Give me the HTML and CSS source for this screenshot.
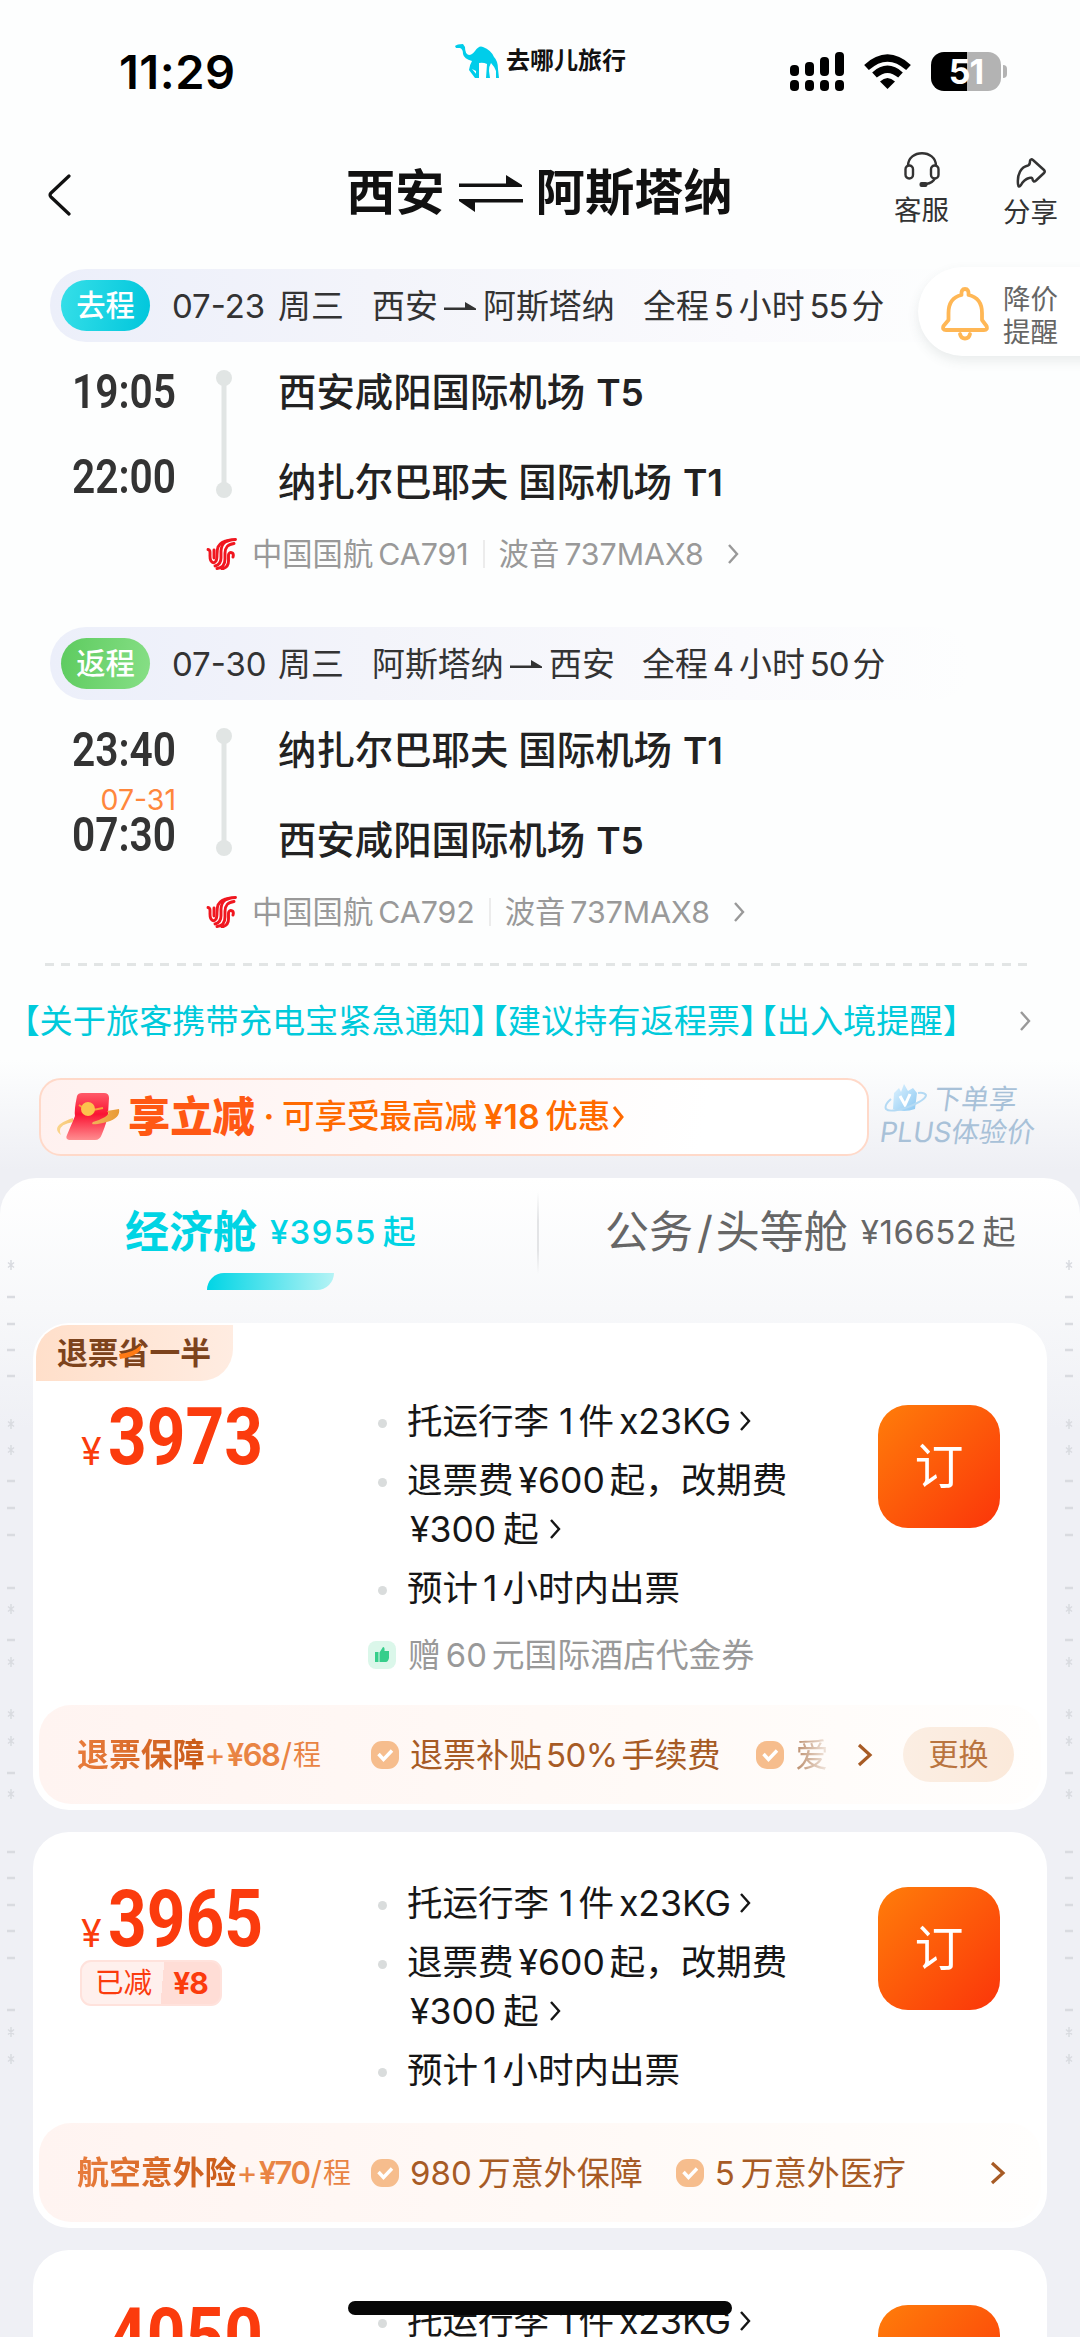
FILE: index.html
```html
<!DOCTYPE html>
<html lang="zh-CN">
<head>
<meta charset="utf-8">
<title>西安 - 阿斯塔纳</title>
<link rel="stylesheet" href="styles.css">
</head>
<body>
<svg class="defs" width="0" height="0">
  <defs>
    <linearGradient id="gRed" x1="0" y1="0" x2="0" y2="1"><stop offset="0" stop-color="#ff5a68"/><stop offset=".45" stop-color="#fa1433"/><stop offset="1" stop-color="#ff8d90"/></linearGradient>
    <linearGradient id="gGold" x1="0" y1="0" x2="1" y2="0"><stop offset="0" stop-color="#fbd58c"/><stop offset="1" stop-color="#e99a35"/></linearGradient>
    <linearGradient id="gGem" x1="0" y1="0" x2="1" y2="1"><stop offset="0" stop-color="#dff3ff"/><stop offset="1" stop-color="#8cc8f2"/></linearGradient>
    <symbol id="more" viewBox="0 0 12 22"><path d="M2 2 10 11 2 20" fill="none" stroke="currentColor" stroke-width="2.4"/></symbol>
    <symbol id="half" viewBox="0 0 33 14"><path d="M0 8.500H21V3L32 9.500V11H0Z" fill="currentColor"/></symbol>
    <symbol id="check" viewBox="0 0 28 28"><rect width="28" height="28" rx="11" fill="#f6bd8d"/><path d="M7.5 13 12.5 18.5 21 9.5" fill="none" stroke="#fff" stroke-width="3.4"/></symbol>
    <symbol id="airchina" viewBox="0 0 31 32"><g fill="none" stroke="#f0161f" stroke-width="2.9" stroke-linecap="round"><path d="M29.500 1.500C18 2 15.500 6 15 13V20C15 25 13 27 9 28"/><path d="M28 5.500C21.500 6.500 19.500 9 19 15V21C19 27 16 30 11 30.500"/><path d="M2 11.500C4.500 12 4 14 4 18C4 25 8 26 10 23C12 20 10 14 12 9C14 5 18 3 23 2.500"/><path d="M8 12V20"/><path d="M27 19C28.500 14 23 13 22.500 17V23C22.500 27 20 30 16 31"/></g></symbol>
  </defs>
</svg>
<div class="screen">
  <header class="status">
    <div class="clock">11:29</div>
    <div class="brand">
      <svg width="46" height="36" viewBox="0 0 46 36"><path fill="#00cdea" d="M0 2Q2 0 8 0L10 3Q10 10 14 11Q17 11 20 7Q24 1 28 3Q36 6 39 13Q43 17 43 25L44 34H41L41 27Q39 22 36 19Q34 22 34 27L35 34H31L32 20Q28 18 24 19L24 34H21L21 27L17 25L22 31L22 34H20L14 26Q15 20 17 17Q9 15 8 10Q8 5 5 4L1 4Z"/></svg>
      <span>去哪儿旅行</span>
    </div>
    <div class="sys">
      <svg width="54" height="40" viewBox="0 0 54 40"><g fill="#000"><rect x="0" y="13" width="9" height="11" rx="4"/><rect x="15" y="10" width="9" height="14" rx="4"/><rect x="30" y="5" width="9" height="19" rx="4"/><rect x="45" y="0" width="9" height="24" rx="4"/><rect x="0" y="28" width="9" height="11" rx="4"/><rect x="15" y="28" width="9" height="11" rx="4"/><rect x="30" y="28" width="9" height="11" rx="4"/><rect x="45" y="28" width="9" height="11" rx="4"/></g></svg>
      <svg class="wifi" width="47" height="36" viewBox="0 0 47 36"><g fill="none" stroke="#000" stroke-width="7"><path d="M2.500 13.500Q23.500-5.500 44.500 13.500"/><path d="M10.500 21Q23.500 9.500 36.500 21"/></g><path d="M16 27.500Q23.500 20.500 31 27.500L23.500 35Z"/></svg>
      <div class="battery"><b>51</b></div><i class="nub"></i>
    </div>
  </header>

  <nav class="nav">
    <svg class="back" width="24" height="42" viewBox="0 0 24 42"><path d="M22 2 4 19Q2 21 4 23L22 40" fill="none" stroke="#111" stroke-width="3.2" stroke-linecap="round"/></svg>
    <h1 class="title"><span>西安</span>
      <svg width="64" height="40" viewBox="0 0 64 40"><path d="M0 10.500H47V2L63 12V14H0ZM64 26V29.500H16V39L0 28V26Z" fill="#111"/></svg>
      <span>阿斯塔纳</span></h1>
    <div class="act service">
      <svg width="36" height="36" viewBox="0 0 36 36"><g fill="none" stroke="#333" stroke-width="2.4"><path d="M4 14C4-3 32-3 32 14"/><rect x="1.500" y="13.500" width="7.500" height="13" rx="3.700"/><rect x="27" y="13.500" width="7.500" height="13" rx="3.700"/><path d="M31 26Q29 31 22 32"/></g><rect x="15.500" y="30" width="8" height="5" rx="2" fill="#333"/></svg>
      <span>客服</span>
    </div>
    <div class="act share">
      <svg width="30" height="30" viewBox="0 0 30 30"><path d="M14 3Q14.500 0 17.500 2.500L28 12Q29.500 13.500 28 15L20 22.500Q17 25 16.500 21Q16 19 13 20Q8 21.500 5 27Q2.500 30.500 2 26C1 16 5 9 12 7.500Q14 7 14 3Z" fill="none" stroke="#333" stroke-width="2.500" stroke-linejoin="round"/></svg>
      <span>分享</span>
    </div>
  </nav>

  <section class="leg out">
    <div class="pill"><b class="tag">去程</b><span class="w106">07-23</span><span class="w94">周三</span><span class="w71">西安</span><svg class="arr" width="33" height="14"><use href="#half"/></svg><span class="w160">阿斯塔纳</span><span class="dur"><i>全程</i><i>5</i><i>小时</i><i>55</i><i>分</i></span></div>
    <div class="route">
      <div class="times"><div>19:05</div><small></small><div>22:00</div></div>
      <svg class="track" width="16" height="128"><path d="M8 8V120" stroke="#e1e5e4" stroke-width="5"/><circle cx="8" cy="8" r="8" fill="#e1e5e4"/><circle cx="8" cy="120" r="8" fill="#e1e5e4"/></svg>
      <div class="ports"><div>西安咸阳国际机场<span>T5</span></div><div>纳扎尔巴耶夫<em></em>国际机场<span>T1</span></div></div>
    </div>
    <div class="plane"><svg width="31" height="32"><use href="#airchina"/></svg><span>中国国航</span><span>CA791</span><i></i><span>波音</span><span>737MAX8</span><svg class="m" width="12" height="22"><use href="#more"/></svg></div>
  </section>

  <section class="leg ret">
    <div class="pill"><b class="tag">返程</b><span class="w106">07-30</span><span class="w94">周三</span><span class="w138">阿斯塔纳</span><svg class="arr" width="33" height="14"><use href="#half"/></svg><span class="w93">西安</span><span class="dur"><i>全程</i><i>4</i><i>小时</i><i>50</i><i>分</i></span></div>
    <div class="route">
      <div class="times"><div>23:40</div><small>07-31</small><div>07:30</div></div>
      <svg class="track" width="16" height="128"><path d="M8 8V120" stroke="#e1e5e4" stroke-width="5"/><circle cx="8" cy="8" r="8" fill="#e1e5e4"/><circle cx="8" cy="120" r="8" fill="#e1e5e4"/></svg>
      <div class="ports"><div>纳扎尔巴耶夫<em></em>国际机场<span>T1</span></div><div>西安咸阳国际机场<span>T5</span></div></div>
    </div>
    <div class="plane"><svg width="31" height="32"><use href="#airchina"/></svg><span>中国国航</span><span>CA792</span><i></i><span>波音</span><span>737MAX8</span><svg class="m" width="12" height="22"><use href="#more"/></svg></div>
  </section>

  <div class="dash"></div>
  <div class="notice"><span>【关于旅客携带充电宝紧急通知】</span><span>【建议持有返程票】</span><span>【出入境提醒】</span><svg width="12" height="22"><use href="#more"/></svg></div>

  <div class="offers">
    <div class="promo">
      <svg width="64" height="50" viewBox="0 0 64 50"><path d="M20 4Q21 1 25 1H47Q52 1 52 6L51 22Q50 30 45 42Q43 48 38 48H12Q8 47 10 43L18 24Q17 18 20 4Z" fill="url(#gRed)"/><path d="M16 26Q-8 34 4 43Q-1 33 16 30ZM36 30Q56 24 50 19L62 17Q64 27 46 31Q32 34 36 30Z" fill="url(#gGold)"/><path d="M22 13 31 19 46 16" fill="none" stroke="#f9a13c" stroke-width="2"/><circle cx="31" cy="17" r="7" fill="#fcc24d"/></svg>
      <b>享立减</b><i>·</i><span>可享受最高减</span><span class="yen">¥18</span><span>优惠</span><svg class="go" width="12" height="24" viewBox="0 0 12 24"><path d="M2 2 10 12 2 22" fill="none" stroke="#ff6a00" stroke-width="3"/></svg>
    </div>
    <div class="plus">
      <div><svg width="44" height="30" viewBox="0 0 44 30"><path d="M10 10 15 5 17 9 20 1 24 8 29 5 33 10 31 26Q20 30 9 26Z" fill="url(#gGem)"/><path d="M16 13 21 22 26 11" fill="none" stroke="#fff" stroke-width="3"/><path d="M7 16Q0 22 2 26Q6 30 24 24Q42 17 42 12Q40 9 34 10" fill="none" stroke="#b4daf4" stroke-width="2"/></svg><span>下单享</span></div>
      <div><span>PLUS体验价</span></div>
    </div>
  </div>

  <main class="cabins">
    <svg class="deco l" width="10" height="810" viewBox="0 0 10 810"><g id="marks" fill="none" stroke="#d9dbe0" stroke-width="1.5"><path id="st" d="M5 2V12M2 4.500 8 9.500M8 4.500 2 9.500"/><use href="#st" y="159"/><use href="#st" y="185"/><use href="#st" y="344"/><use href="#st" y="397"/><use href="#st" y="449"/><use href="#st" y="476"/><use href="#st" y="529"/><use href="#st" y="767"/><use href="#st" y="794"/><path stroke-width="2.4" d="M1 39H9M1 66H9M1 92H9M1 118H9M1 223H9M1 250H9M1 277H9M1 330H9M1 382H9M1 515H9M1 594H9M1 620H9M1 647H9M1 673H9M1 700H9M1 752H9"/></g></svg>
    <svg class="deco r" width="10" height="810" viewBox="0 0 10 810"><use href="#marks"/></svg>
    <div class="tabs">
      <div class="tab on"><b>经济舱</b><span>¥3955</span><span>起</span></div>
      <div class="tab"><b>公务</b><b class="sl">/</b><b>头等舱</b><span>¥16652</span><span>起</span></div>
    </div>

    <article class="card c1">
      <div class="ribbon">退票省一半<svg width="24" height="14" viewBox="0 0 24 14"><path d="M0 9Q14 8 22 0Q24 10 1 14Z" fill="#ff7a14"/></svg></div>
      <div class="fare">
        <div class="price"><span>¥</span><b>3973</b></div>
        <ul>
          <li><span>托运行李</span><span>1</span><span>件</span><span>x23KG</span><svg width="12" height="22"><use href="#more"/></svg></li>
          <li><span>退票费</span><span>¥600</span><span>起，改期费</span></li>
          <li class="cont"><span>¥300</span><span>起</span><svg width="12" height="22"><use href="#more"/></svg></li>
          <li><span>预计</span><span>1</span><span>小时内出票</span></li>
          <li class="gift"><svg width="28" height="28" viewBox="0 0 28 28"><rect width="28" height="28" rx="8" fill="#dbf7ea"/><path d="M7 11H10.500V21H7ZM11.500 11.500 15 6Q17 6 16.500 10H21V17Q20 21 18 21H11.500Z" fill="#36ce8b"/></svg><span>赠</span><span>60</span><span>元国际酒店代金券</span></li>
        </ul>
        <button>订</button>
      </div>
      <div class="strip">
        <div class="plan"><b>退票保障</b><i>+</i><em>¥68</em><i class="s">/</i><small>程</small></div>
        <svg width="28" height="28"><use href="#check"/></svg><span>退票补贴</span><span class="pct">50%</span><span>手续费</span>
        <svg class="ck2" width="28" height="28"><use href="#check"/></svg><span class="fade">爱</span>
        <svg class="go" width="16" height="24" viewBox="0 0 16 24"><path d="M2 2 13 12 2 22" fill="none" stroke="#a75b25" stroke-width="3.200"/></svg>
        <span class="swap">更换</span>
      </div>
    </article>

    <article class="card c2">
      <div class="fare">
        <div class="price"><span>¥</span><b>3965</b><div class="cut"><span>已减</span><b>¥8</b></div></div>
        <ul>
          <li><span>托运行李</span><span>1</span><span>件</span><span>x23KG</span><svg width="12" height="22"><use href="#more"/></svg></li>
          <li><span>退票费</span><span>¥600</span><span>起，改期费</span></li>
          <li class="cont"><span>¥300</span><span>起</span><svg width="12" height="22"><use href="#more"/></svg></li>
          <li><span>预计</span><span>1</span><span>小时内出票</span></li>
        </ul>
        <button>订</button>
      </div>
      <div class="strip">
        <div class="plan"><b>航空意外险</b><i>+</i><em>¥70</em><i class="s">/</i><small>程</small></div>
        <svg width="28" height="28"><use href="#check"/></svg><span>980</span><span>万意外保障</span>
        <svg class="ck3" width="28" height="28"><use href="#check"/></svg><span>5</span><span>万意外医疗</span>
        <svg class="go" width="16" height="24" viewBox="0 0 16 24"><path d="M2 2 13 12 2 22" fill="none" stroke="#a75b25" stroke-width="3.200"/></svg>
      </div>
    </article>

    <article class="card c3">
      <div class="fare">
        <div class="price"><span>¥</span><b>4050</b></div>
        <ul>
          <li><span>托运行李</span><span>1</span><span>件</span><span>x23KG</span><svg width="12" height="22"><use href="#more"/></svg></li>
        </ul>
        <button>订</button>
      </div>
    </article>
  </main>

  <aside class="alert">
    <svg width="48" height="54" viewBox="0 0 48 54"><g fill="none" stroke="#ffb755" stroke-width="3.800" stroke-linejoin="round"><path d="M20.500 8Q20 2 24 2Q28 2 27.500 8Q41 11 41 26V33L45.500 39Q47 43 43 43H5Q1 43 2.500 39L7.500 33V26Q7.500 11 20.500 8Z"/><path d="M19 47Q20 51.500 24 51.500Q28 51.500 29 47" stroke-linecap="round"/></g></svg>
    <div><span>降价</span><span>提醒</span></div>
  </aside>
  <div class="homebar"></div>
</div>
</body>
</html>
```
FILE: styles.css
```css
* { box-sizing: border-box; margin: 0; padding: 0; }
body { background: #eff0f5; }
i, em { font-style: normal; }
svg { display: block; flex: none; }
.defs { position: absolute; }
.screen {
  position: relative; width: 1080px; height: 2337px; overflow: hidden;
  font-family: Inter, "Noto Sans CJK SC", sans-serif; color: #222; white-space: nowrap;
  background: linear-gradient(#fdfefe 0, #fdfefe 1060px, #eeeff4 1170px);
}

/* status bar */
.status { display: flex; height: 110px; }
.clock { width: 455px; padding-left: 119px; font-size: 47px; font-weight: 600; line-height: 50px; padding-top: 47px; color: #000; letter-spacing: .5px; }
.brand { display: flex; width: 335px; padding-top: 44px; }
.brand span { margin-left: 5px; font-size: 24px; font-weight: 700; line-height: 34px; color: #111; }
.sys { display: flex; align-items: flex-start; padding-top: 52px; }
.wifi { margin: 2px 20px 0; }
.battery { width: 70px; height: 39px; border-radius: 13px; background: linear-gradient(90deg, #000 51%, #b3b3b3 51%); color: #fff; text-align: center; }
.battery b { font-size: 34px; line-height: 39px; font-weight: 700; letter-spacing: -1px; }
.nub { width: 4px; height: 13px; margin: 13px 0 0 2px; border-radius: 0 4px 4px 0; background: #b3b3b3; }

/* navigation */
.nav { display: flex; height: 159px; }
.back { margin: 64px 0 0 47px; }
.title { display: flex; width: 400px; margin-left: 275px; font-size: 49.300px; line-height: 60px; font-weight: 700; color: #111; padding-top: 52px; }
.title svg { margin: 11px 13px 0 14px; }
.act { font-size: 27.500px; line-height: 32px; color: #333; }
.act svg { margin: 0 auto; }
.service { width: 55px; margin-left: 148px; padding-top: 42px; }
.service span { display: block; margin-top: 6px; }
.share { width: 55px; margin-left: 54px; padding-top: 48px; }
.share span { display: block; margin-top: 8px; }

/* flight legs */
.leg { height: 358px; }
.ret { height: 336px; }
.pill { display: flex; align-items: center; height: 73px; margin-left: 50px; width: 920px; padding-left: 11px; border-radius: 36px; font-size: 32.900px; line-height: 40px; color: #333; background: linear-gradient(90deg, #eceffa, #f3f4fa 35%, #fafafd 75%, rgba(253,254,254,0)); }
.tag { width: 89px; height: 51px; margin-right: 22px; border-radius: 26px; font-size: 29.300px; line-height: 51px; font-weight: 500; text-align: center; color: #fff; background: linear-gradient(100deg, #36dfe8, #00c6dc); }
.ret .tag { background: linear-gradient(100deg, #5dcb5f, #87df86); }
.w106 { width: 106px; }
.w94 { width: 94px; }
.w71 { width: 72px; }
.w160 { width: 160px; }
.w138 { width: 138px; }
.w93 { width: 93px; }
.arr { margin-right: 6px; color: #333; }
.dur { display: flex; gap: 5px; }
.dur i:nth-child(4) { margin: 0 -1px 0 0; letter-spacing: -1px; }
.route { display: flex; height: 163px; }
.times { width: 176px; padding-top: 25px; text-align: right; font-family: Roboto, sans-serif; font-weight: 600; font-size: 49px; line-height: 50px; color: #333; }
.times div { transform: scaleX(.83); transform-origin: 100% 50%; }
.times small { display: block; height: 35px; padding-top: 10px; line-height: 30px; font-family: Inter, sans-serif; font-size: 28.500px; font-weight: 400; color: #ff873c; }
.track { margin: 28px 46px 0 40px; }
.ports { padding-top: 25px; font-size: 38.400px; line-height: 50px; font-weight: 500; color: #222; }
.ports div { margin-bottom: 39px; }
.ports span { margin-left: 11px; font-weight: 600; font-size: 37px; }
.ports em { display: inline-block; width: 10px; }
.plane { display: flex; align-items: center; height: 40px; margin-top: 29px; padding-left: 206px; font-size: 30.300px; line-height: 40px; color: #999; }
.plane svg { margin-right: 15px; }
.plane span + span { margin-left: 5px; }
.plane i { width: 2px; height: 28px; margin: 0 14px; background: #ececec; }
.plane .m { margin: 0 0 0 23px; }

/* notices */
.dash { height: 3px; margin: 0 50px 0 45px; background: repeating-linear-gradient(90deg, #e2e5e5 0 9px, transparent 9px 16.500px); }
.notice { display: flex; align-items: center; height: 110px; padding-left: 23px; font-size: 33.200px; color: #00cadb; font-feature-settings: "halt"; font-family: "Noto Sans CJK SC", sans-serif; line-height: 48px; }
.notice span { margin-top: -5px; }
.notice span + span { margin-left: 3.500px; }
.notice svg { margin: 0 49px 0 auto; color: #999; }

/* offers */
.offers { display: flex; height: 102px; padding-top: 2px; }
.promo { display: flex; align-items: center; width: 830px; height: 78px; margin: 0 11px 0 39px; padding-left: 16px; border: 2px solid #ffd9c9; border-radius: 22px; background: linear-gradient(100deg, #fff1ef, #fff 80%); font-size: 32.500px; line-height: 44px; font-weight: 500; color: #ff6a00; }
.promo b { margin-left: 7px; font-size: 42.300px; font-weight: 800; color: #ff5814; }
.promo i { width: 14px; margin: 0 6px 0 7px; text-align: center; font-weight: 700; }
.promo .yen { margin: 0 5px 0 7px; font-size: 34px; font-weight: 600; letter-spacing: .3px; }
.promo .go { margin-left: 2px; }
.plus { font-size: 27.700px; line-height: 33px; color: #a8c1d8; padding-top: 5px; }
.plus div { display: flex; height: 33px; }
.plus span { transform: skewX(-8deg); }
.plus svg { margin: 0 6px 0 4px; }

/* cabin list */
.cabins { position: relative; height: 1160px; border-radius: 36px 36px 0 0; background: linear-gradient(#fff, #f7f8fa 130px, #eff0f5 250px); }
.deco { position: absolute; top: 80px; }
.deco.l { left: 6px; }
.deco.r { right: 6px; }
.tabs { display: flex; height: 145px; }
.tab { display: flex; width: 541px; padding: 30px 0 0 66px; font-size: 33px; line-height: 48px; color: #666; }
.tab b { font-size: 44px; font-weight: 400; }
.tab .sl { margin: 0 3px 0 4px; }
.tab span { margin-left: 6px; letter-spacing: .5px; }
.tab b + span { margin-left: 13px; }
.tab.on { position: relative; width: 539px; padding-left: 125px; color: #00d4e4; font-weight: 500; border-right: 2px solid; border-image: linear-gradient(transparent 10%, #e3e4e6 30%, #e3e4e6 50%, transparent 66%) 1; }
.tab.on span { letter-spacing: 1.200px; }
.tab.on b { font-weight: 700; }
.tab.on::after { content: ""; position: absolute; left: 207px; top: 95px; width: 127px; height: 17px; border-radius: 17px 0 17px 0; background: linear-gradient(90deg, #00d5e5, #b5f3f5); }
.card { position: relative; width: 1014px; margin: 0 0 22px 33px; border-radius: 36px; background: #fff; overflow: hidden; }
.c1 { height: 487px; }
.c2 { height: 396px; }
.c3 { height: 400px; }
.ribbon { position: absolute; left: 3px; top: 2px; width: 197px; height: 56px; padding-left: 21px; border-radius: 32px 0 32px 0; background: linear-gradient(90deg, #ffdfca, #ffece1); font-size: 30.800px; font-weight: 700; line-height: 56px; color: #7d431c; }
.ribbon svg { position: absolute; left: 83px; top: 20px; }
.fare { display: flex; height: 382px; padding-top: 75px; }
.c2 .fare, .c3 .fare { height: 291px; padding-top: 48px; }
.price { position: relative; width: 335px; padding-left: 48px; display: flex; height: 96px; color: #fb3b0d; }
.price > span { width: 27px; padding-top: 32px; font-size: 37.500px; line-height: 44px; }
.price > b { font: 700 80px/96px Roboto, sans-serif; transform: scaleX(.845); transform-origin: 0 50%; margin-top: -9px; }
.cut { position: absolute; left: 47px; top: 80px; display: flex; width: 142px; height: 46px; padding-left: 13px; border: 2px solid #ffe2dc; border-radius: 11px; background: linear-gradient(95deg, #fff0ed 58%, #ffddd6 58%); font-size: 28.600px; line-height: 42px; }
.cut b { margin-left: 21px; font-size: 30px; font-weight: 700; letter-spacing: -1px; }
.fare ul { width: 510px; padding-left: 39px; list-style: none; font-size: 35.500px; line-height: 48px; color: #161616; }
.fare li { position: relative; display: flex; align-items: center; height: 48px; margin-bottom: 11px; gap: 5px; }
.fare li svg { margin-left: 3px; margin-top: -2px; }
.fare li:nth-child(2) { margin-bottom: 1px; }
.fare li:first-child span:first-child { margin-right: 5px; }
.fare li::before { content: ""; position: absolute; left: -29px; top: 21px; width: 9px; height: 9px; border-radius: 50%; background: #d9dcdc; }
.fare .cont::before, .fare .gift::before { display: none; }
.fare .cont { padding-left: 3px; gap: 7px; }
.fare .gift { margin-top: 18px; font-size: 32.800px; color: #999; gap: 5px; }
.fare .gift svg { margin: 0 7px 0 -39px; }
.fare button { width: 122px; height: 123px; margin-top: 7px; border: 0; border-radius: 30px; background: linear-gradient(135deg, #ff7d0a, #fb350a); color: #fff; font-family: inherit; font-size: 49px; font-weight: 400; line-height: 120px; }
.strip { display: flex; align-items: center; width: 1002px; height: 99px; margin-left: 6px; padding-left: 38px; border-radius: 32px; background: linear-gradient(90deg, #fff4f1, #fffaf7 60%, #fffefd); font-size: 33px; line-height: 44px; color: #a75b25; }
.plan { display: flex; align-items: center; width: 294px; color: #e98443; }
.plan b { font-size: 31.900px; font-weight: 700; background: linear-gradient(90deg, #e87c3c, #c95a17); -webkit-background-clip: text; background-clip: text; color: transparent; }
.plan i { font-size: 32px; font-weight: 400; }
.plan em { margin-left: 1px; font-size: 31px; font-weight: 600; letter-spacing: -1.500px; }
.plan .s { margin: 0 1px; }
.plan small { font-size: 28px; }
.strip > svg { margin-right: 11px; }
.strip > span + span { margin-left: 6px; }
.c1 .strip > span + span { margin-left: 4px; }
.pct { letter-spacing: -.6px; }
.strip > .ck2 { margin-left: 36px; }
.strip > .ck3 { margin-left: 33px; }
.strip .fade { background: linear-gradient(90deg, #b98a68, #f3e9e2); -webkit-background-clip: text; background-clip: text; color: transparent; }
.strip > .go { margin: 0 30px 0 auto; }
.c2 .strip > .go { margin-right: 35px; }
.strip .swap { width: 111px; height: 55px; margin-right: 27px; border-radius: 28px; text-align: center; font-size: 30px; line-height: 54px; background: linear-gradient(90deg, #fbeee3, #fbe9da); color: #b9743f; }

/* floating elements */
.alert { position: absolute; left: 918px; top: 267px; display: flex; width: 180px; height: 89px; padding: 20px 0 0 23px; border-radius: 45px 0 0 45px; background: #fff; box-shadow: 0 5px 12px rgba(60, 80, 80, .1); }
.alert div { margin: -4px 0 0 14px; font-size: 27.500px; line-height: 33px; color: #666; }
.alert span { display: block; }
.homebar { position: absolute; left: 348px; top: 2301px; width: 384px; height: 14px; border-radius: 7px; background: #070707; }
```
